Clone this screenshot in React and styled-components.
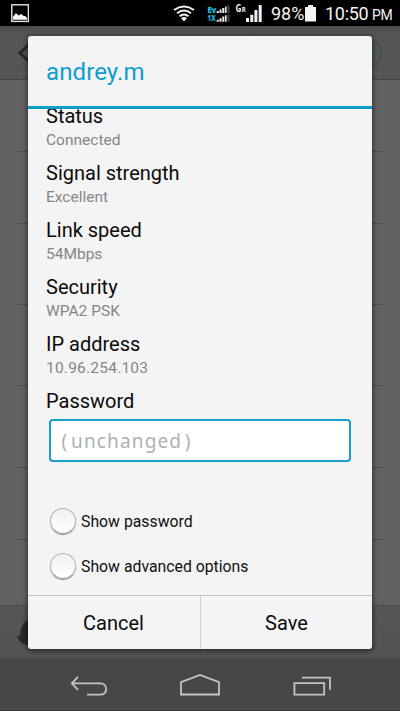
import React from "react";
import styled, { createGlobalStyle } from "styled-components";

const GlobalStyle = createGlobalStyle`
  *, *::before, *::after { box-sizing: border-box; }
  html, body { margin: 0; padding: 0; background: #000; }
  body { font-family: Roboto, "Liberation Sans", sans-serif; color: #000; }
`;

const Screen = styled.main`
  position: relative;
  width: 400px;
  height: 711px;
  overflow: hidden;
  display: grid;
  grid-template-columns: 400px;
  grid-template-rows: 26px 54px 525px 53px 53px;
`;

const StatusBar = styled.header`
  display: flex;
  align-items: center;
  padding: 0 0 0 11px;
  background: #000;
  color: #f2f2f2;
`;

const StatusIcon = styled.svg`
  display: block;
  flex: none;
  width: ${(p) => p.$w}px;
  height: 26px;
  margin-left: ${(p) => p.$gap || 0}px;
`;

const StatusText = styled.span`
  flex: none;
  width: ${(p) => p.$w}px;
  margin-left: ${(p) => p.$gap || 0}px;
  font-size: ${(p) => p.$size}px;
  line-height: 26px;
  letter-spacing: ${(p) => p.$track || 0}px;
  padding-top: ${(p) => p.$drop || 0}px;
  white-space: nowrap;
`;

const ActionBar = styled.div`
  display: flex;
  justify-content: space-between;
  align-items: center;
  padding: 0 18px;
  background: linear-gradient(#4c4c4c, #565656 8px, #555);
  border-bottom: 1px solid #424242;
`;

const ToggleKnob = styled.div`
  width: 26px;
  height: 26px;
  border: 1px solid #2c4743;
  border-radius: 50%;
`;

const NetworkList = styled.div`
  display: flex;
  flex-direction: column;
  padding: 0 18px;
  background: #616161;
`;

const NetworkRow = styled.div`
  height: ${(p) => p.$h}px;
  border-bottom: 1px solid #4a4a4a;
`;

const BottomBar = styled.div`
  display: flex;
  align-items: center;
  padding: 0 17px;
  border-top: 1px solid #494949;
  background: linear-gradient(#575757, #525252);
`;

const NavBar = styled.nav`
  display: flex;
  justify-content: space-between;
  padding: 0 67px;
  background: #474748;
  border-bottom: 1px solid #373738;
`;

const NavIcon = styled.svg`
  display: block;
  width: 44px;
  height: 52px;
  fill: none;
  stroke: #c3c3c3;
  stroke-width: 1.8;
`;

const Dialog = styled.section`
  position: absolute;
  left: 28px;
  top: 36px;
  width: 344px;
  height: 613px;
  display: flex;
  flex-direction: column;
  overflow: hidden;
  border-radius: 3px;
  background: #f4f4f4;
  box-shadow: 0 1px 5px 1px rgba(0, 0, 0, 0.5);
`;

const Title = styled.h1`
  flex: none;
  height: 73px;
  margin: 0;
  padding: 1px 18px 0;
  border-bottom: 3px solid #0d9dcb;
  font-size: 24px;
  font-weight: 400;
  line-height: 70px;
  letter-spacing: 0.1px;
  color: #0d9dcf;
`;

const Body = styled.div`
  flex: 1;
  min-height: 0;
  overflow: hidden;
  padding: 0 18px;
`;

const Details = styled.dl`
  display: grid;
  grid-auto-rows: 57px;
  margin: -5px 0 0;
`;

const Label = styled.dt`
  font-size: 20px;
  line-height: 25px;
  margin-bottom: 1px;
  color: #0b0b0b;
`;

const Value = styled.dd`
  margin: 0;
  font-size: 15.5px;
  line-height: 20px;
  letter-spacing: ${(p) => (p.$numeric ? 0.22 : 0)}px;
  color: #868686;
`;

const PasswordLabel = styled.div`
  height: 30px;
  font-size: 20px;
  line-height: 25px;
  color: #0b0b0b;
`;

const PasswordField = styled.div`
  width: 302px;
  height: 43px;
  margin-left: 3px;
  padding-left: 8px;
  border: 2px solid #169fce;
  border-radius: 4px;
  background: #fff;
  font-family: "Noto Sans", "Open Sans", sans-serif;
  font-size: 19px;
  line-height: 40px;
  letter-spacing: 1.15px;
  color: #b0b0b0;
`;

const Paren = styled.span`
  display: inline-block;
  width: 12px;
  text-align: center;
`;

const Options = styled.div`
  display: grid;
  grid-auto-rows: 44.5px;
  margin: 37px 0 0 4px;
`;

const Option = styled.label`
  display: flex;
  align-items: center;
  gap: 5px;
  font-size: 15.8px;
  color: #101010;
`;

const OptionKnob = styled.span`
  width: 26px;
  height: 26px;
  border: 1px solid #b4b4b4;
  border-bottom-color: #999;
  border-radius: 50%;
  background: linear-gradient(#f0f0f0, #fff);
  box-shadow: 0 1px 1px #9b9b9b;
`;

const OptionText = styled.span`
  padding-top: 1px;
`;

const Actions = styled.footer`
  flex: none;
  display: grid;
  grid-template-columns: 173px 1fr;
  height: 54px;
  border-top: 1px solid #c6c6c6;
`;

const ActionButton = styled.button`
  padding: 0 ${(p) => (p.$divided ? 1 : 0)}px 0 0;
  border: 0;
  border-right: ${(p) => (p.$divided ? "1px solid #cdcdcd" : "0")};
  background: none;
  font: 400 20px Roboto, "Liberation Sans", sans-serif;
  color: #0b0b0b;
`;

const details = [
  ["Status", "Connected"],
  ["Signal strength", "Excellent"],
  ["Link speed", "54Mbps"],
  ["Security", "WPA2 PSK"],
  ["IP address", "10.96.254.103"],
];

const rowHeights = [72, 72, 81, 81, 82, 72];

function StatusIcons() {
  return (
    <StatusBar>
      <StatusIcon $w={18} viewBox="0 0 18 26">
        <rect x="0.8" y="4.8" width="16.6" height="16.6" fill="none" stroke="#e6e6e6" strokeWidth="1.4" />
        <path d="M2 19.8v-3.2l1.5-1.7 1-1.7 1.6.8 1.5 1.6 2.8-1.5 1.8 1.6 2 .3 1.8 2v1.8z" fill="#f5f5f5" />
      </StatusIcon>
      <StatusIcon $w={22} $gap={144} viewBox="0 0 22 26">
        <g fill="none" stroke="#f2f2f2" strokeWidth="2">
          <path d="M1 10Q11 3.2 21 10" />
          <path d="M4 13.2Q11 8 18 13.2" />
          <path d="M6.6 16.3Q11 12.6 15.4 16.3" />
        </g>
        <path d="M8 18.2Q11 15.8 14 18.2L11 21.4z" fill="#f2f2f2" />
      </StatusIcon>
      <StatusIcon $w={24} $gap={12} viewBox="0 0 24 26">
        <g fill="#22c4ee" stroke="#22c4ee" strokeWidth="0.2" fontFamily="Open Sans, Roboto, sans-serif" fontSize="8.6" fontWeight="700">
          <text x="0.5" y="12.6" textLength="8.6" lengthAdjust="spacingAndGlyphs">Ev</text>
          <text x="0.5" y="21.4" textLength="8" lengthAdjust="spacingAndGlyphs">1X</text>
        </g>
        <path d="M9.7 11h2v2h-2zM12.5 9.5h2V13h-2zM15.3 8h2v5h-2zM9.7 19.7h2v2h-2zM12.5 18.2h2v3.5h-2zM15.3 16.6h2v5.1h-2z" fill="#f0f0f0" />
        <path d="M18 6.5h1.7V13H18z M18 15.2h1.7v6.5H18z" fill="#e0e0e0" />
        <path d="M20.6 5h1.8v8h-1.8zM20.6 14h1.8v7.7h-1.8z" fill="#464646" />
      </StatusIcon>
      <StatusIcon $w={29} $gap={4} viewBox="0 0 29 26">
        <g fill="#f0f0f0" fontFamily="Open Sans, Roboto, sans-serif" fontWeight="700">
          <text x="0.5" y="12.3" fontSize="9.8" textLength="6" lengthAdjust="spacingAndGlyphs">G</text>
          <text x="6.8" y="12.3" fontSize="7" textLength="4" lengthAdjust="spacingAndGlyphs">R</text>
        </g>
        <path d="M11 18h3v4h-3zM15.3 14.7h3V22h-3zM19.4 10h3v12h-3zM23.7 5h3v17h-3z" fill="#f0f0f0" />
      </StatusIcon>
      <StatusText $w={33} $gap={7} $size={18} $drop={1}>98%</StatusText>
      <StatusIcon $w={12} $gap={1} viewBox="0 0 12 26">
        <path d="M3 5h5v2h3v14.5H0V7h3z" fill="#f4f4f4" />
      </StatusIcon>
      <StatusText $w={43} $gap={8} $size={18} $drop={1} $track={-0.3}>10:50</StatusText>
      <StatusText $w={22} $gap={4} $size={14} $drop={3} $track={-0.4}>PM</StatusText>
    </StatusBar>
  );
}

export default function App() {
  return (
    <>
      <GlobalStyle />
      <Screen>
        <StatusIcons />
        <ActionBar>
          <svg width="14" height="22" viewBox="0 0 14 22" fill="none" stroke="#292929" strokeWidth="3">
            <path d="M12 1.5L2 11l10 9.5" />
          </svg>
          <ToggleKnob />
        </ActionBar>
        <NetworkList>
          {rowHeights.map((h, i) => <NetworkRow key={i} $h={h} />)}
        </NetworkList>
        <BottomBar>
          <svg width="32" height="32" viewBox="0 0 32 32" fill="#292929">
            <path d="M0 20h3.3C2.8 10 8 4 16 1v29C8 30 2.5 27 0 20z" />
          </svg>
        </BottomBar>
        <NavBar>
          <NavIcon viewBox="67 0 44 52">
            <path d="M78 18.8L71.8 25.3 78 31.8M72 25.3H100.5a5.7 5.7 0 0 1 0 11.4H87" />
          </NavIcon>
          <NavIcon viewBox="178 0 44 52">
            <path d="M181 36.5V24.2L200 17l19 7.2v12.3z" />
          </NavIcon>
          <NavIcon viewBox="289 0 44 52">
            <path d="M294.4 25.2h29.8v11.4h-29.8zM302 19.7h28v12" />
          </NavIcon>
        </NavBar>
        <Dialog>
          <Title>andrey.m</Title>
          <Body>
            <Details>
              {details.map(([label, value]) => (
                <div key={label}>
                  <Label>{label}</Label>
                  <Value $numeric={label === "IP address"}>{value}</Value>
                </div>
              ))}
            </Details>
            <PasswordLabel>Password</PasswordLabel>
            <PasswordField>
              <Paren>(</Paren>unchanged<Paren>)</Paren>
            </PasswordField>
            <Options>
              <Option><OptionKnob /><OptionText>Show password</OptionText></Option>
              <Option><OptionKnob /><OptionText>Show advanced options</OptionText></Option>
            </Options>
          </Body>
          <Actions>
            <ActionButton $divided>Cancel</ActionButton>
            <ActionButton>Save</ActionButton>
          </Actions>
        </Dialog>
      </Screen>
    </>
  );
}
